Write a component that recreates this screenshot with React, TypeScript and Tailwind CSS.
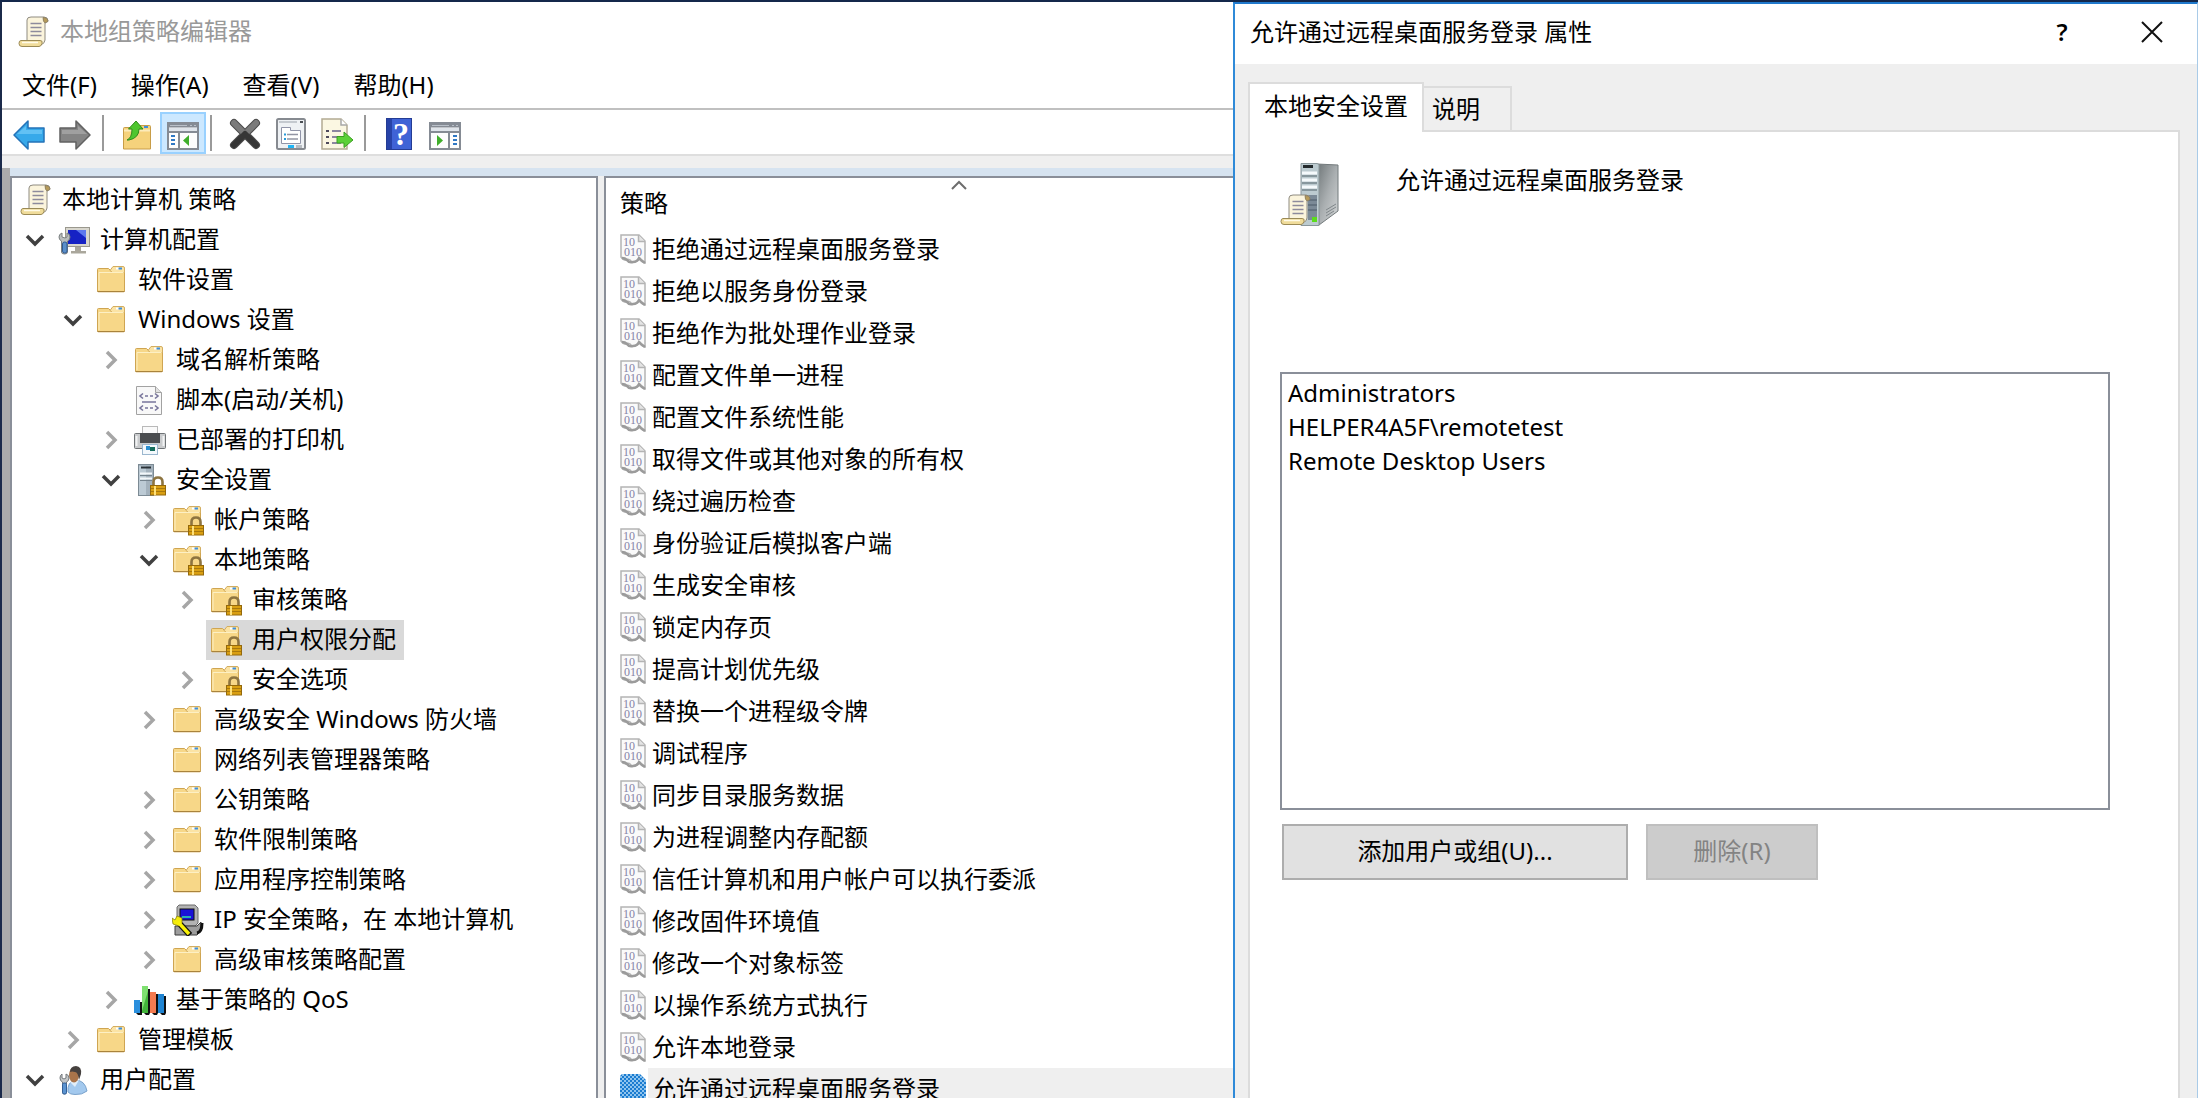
import type { ReactNode } from 'react'

/* ---------- icons ---------- */

function ScrollShape() {
  return (
    <g>
      <path d="M9 26V4q0-3 4-3h13q4 0 4 4l-3 2v17q0 3-4 5h-3z" fill="#fbf4dc" stroke="#8f8b80" />
      <path d="M25 1.500q5 0 5 4l-3 1.500q-2-1-2-5.500z" fill="#b59a5a" stroke="#857a60" strokeWidth="0.8" />
      <path d="M12.500 7.500h11M12.500 11.500h11M12.500 15.500h11M12.500 19.500h11" stroke="#8d8a9c" strokeWidth="1.6" />
      <path d="M3 24.500h19q3 0 2 3-1 3-3 3H4q-3 0-3-3t2-3z" fill="#f0dc9a" stroke="#9b8a55" />
      <path d="M4 26.500h16" stroke="#fffbe8" strokeWidth="1.5" />
    </g>
  )
}

function ScrollIcon() {
  return (
    <svg viewBox="0 0 32 32" className="size-8" aria-hidden="true">
      <ScrollShape />
    </svg>
  )
}

function FolderShape() {
  return (
    <g>
      <path d="M1.500 27V5.500q0-1 1-1h10l2 2h14V27q0 .8-1 .8h-25q-1 0-1-.8z" fill="#f7d788" stroke="#cfa552" />
      <path d="M14 6.500l3-4h10q1.500 0 1.500 1.500v4.500h-12z" fill="#fbe3a4" stroke="#d3ad60" />
      <path d="M20 4.500h3" stroke="#fff" strokeWidth="2" />
      <path d="M22.500 4.500h3.500" stroke="#3f8edb" strokeWidth="2" />
      <path d="M3 26V8.500h24.500" fill="none" stroke="#fdf0c4" />
      <path d="M1.500 27.500h27" stroke="#a9833c" />
    </g>
  )
}

function LockShape() {
  return (
    <g>
      <path d="M19.500 23v-5q0-4.500 4.500-4.500t4.500 4.500v5" fill="none" stroke="#8d7440" strokeWidth="2.6" />
      <rect x="16.500" y="21.500" width="15" height="9.500" fill="#d99f12" stroke="#94690b" />
      <path d="M17 24.500h14M17 27.500h14" stroke="#a8780c" />
      <path d="M21 22v9" stroke="#ffe17a" strokeWidth="2" />
    </g>
  )
}

function FolderIcon() {
  return (
    <svg viewBox="0 0 32 32" className="size-8" aria-hidden="true">
      <FolderShape />
    </svg>
  )
}

function LockedFolderIcon() {
  return (
    <svg viewBox="0 0 32 32" className="size-8" aria-hidden="true">
      <FolderShape />
      <LockShape />
    </svg>
  )
}

function ComputerIcon() {
  return (
    <svg viewBox="0 0 32 32" className="size-8" aria-hidden="true">
      <rect x="7.500" y="3.500" width="24" height="19" fill="#d8d6cd" stroke="#9a988e" />
      <rect x="10" y="6" width="18" height="14" fill="#1622c4" />
      <path d="M18 6h10v8z" fill="#5d78ee" />
      <path d="M17 23h6v4h5v2.500H13V27h4z" fill="#aaa79c" />
      <path d="M1 13q0-3 3-4v4l3 1 2-1V9q3 1 3 4 0 3-2.500 4v11q0 2-3 2t-3-2V17Q1 16 1 13z" fill="#b9bdbd" stroke="#7a7f80" />
      <rect x="4.500" y="18" width="4.500" height="11" rx="2" fill="#5b8fc9" stroke="#2d5a94" />
    </svg>
  )
}

function ScriptIcon() {
  return (
    <svg viewBox="0 0 32 32" className="size-8" aria-hidden="true">
      <path d="M2.500 2.500h19l6 6v22h-25z" fill="#f8f8f8" stroke="#a2a2a2" />
      <path d="M21.500 2.500v6h6" fill="#e1e1e1" stroke="#a2a2a2" />
      <path
        d="M9 9.500l-3 2.500 3 2.500M21 9.500l3 2.500-3 2.500M9 21.500L6 24l3 2.500M21 21.500l3 2.500-3 2.500M11 12h3M16 12h3M11 24h3M16 24h3M8 18h14"
        fill="none"
        stroke="#77749a"
        strokeWidth="1.600"
      />
    </svg>
  )
}

function PrinterIcon() {
  return (
    <svg viewBox="0 0 32 32" className="size-8" aria-hidden="true">
      <rect x="8.500" y="2.500" width="15" height="9" fill="#fafafa" stroke="#b9b9b9" />
      <rect x="0.500" y="9.500" width="31" height="15" rx="1" fill="#c9cbcd" stroke="#6f7376" />
      <rect x="6" y="9" width="20" height="10" fill="#4b4d50" />
      <path d="M2.500 12v10M29.500 12v10" stroke="#f2f3f4" strokeWidth="2" />
      <rect x="8.500" y="20.500" width="15" height="10" fill="#f4f9fd" stroke="#9bb7cf" />
      <rect x="12" y="22" width="4" height="4" fill="#2c8fd0" />
      <rect x="16" y="23" width="5" height="4" fill="#156d5c" />
    </svg>
  )
}

function ServerLockIcon() {
  return (
    <svg viewBox="0 0 32 32" className="size-8" aria-hidden="true">
      <rect x="4.500" y="0.500" width="15" height="31" fill="#a3b1bc" stroke="#7c8a94" />
      <path d="M5 2h7v29H5z" fill="#bccad4" />
      <path d="M7 3.500h10" stroke="#2b3238" strokeWidth="2" />
      <path d="M6 9.500h12M6 14.500h12" stroke="#f3f7fa" strokeWidth="2" />
      <path d="M6 11.500h12M6 16.500h12" stroke="#75838d" />
      <LockShape />
    </svg>
  )
}

function IpSecurityIcon() {
  return (
    <svg viewBox="0 0 32 32" className="size-8" aria-hidden="true">
      <path d="M7 1h16l3 3v15l-3 3H7l-2-2V3z" fill="#b3b3b3" stroke="#6d6d6d" />
      <rect x="8" y="5" width="14" height="11" fill="#1a12d8" stroke="#111" />
      <path d="M10 13h9" stroke="#29b0b0" strokeWidth="2" />
      <path d="M3 22h22l4-4v8l-4 5H3z" fill="#9d9d9d" stroke="#3b3b3b" />
      <path d="M25 29q5-1 5-10" fill="none" stroke="#111" strokeWidth="3" />
      <path d="M7 19l11 12" stroke="#111" strokeWidth="6" />
      <path d="M0 14l3 2 2-4 5 2v5l-3 3-6-2z" fill="#f4ec0c" stroke="#8a8410" strokeWidth="0.800" />
      <path d="M6 18l11 12" stroke="#f9f107" strokeWidth="3.500" />
    </svg>
  )
}

function QosIcon() {
  return (
    <svg viewBox="0 0 32 32" className="size-8" aria-hidden="true">
      <path d="M2 18h6v13H4l-2-2zM10 5h6v24l-1 2h-3l-2-2zM18 10h6v19l-1 2h-3l-2-2zM26 12h6v17l-1 2h-3l-2-2z" fill="#101010" />
      <rect x="0" y="16" width="6" height="13" fill="#2a8fdd" />
      <rect x="8" y="2" width="6" height="27" fill="#43b53b" />
      <path d="M8 2h6v5l-6 20z" fill="#7fe070" />
      <rect x="16" y="8" width="6" height="21" fill="#f47b50" />
      <rect x="24" y="10" width="6" height="19" fill="#1f84d2" />
    </svg>
  )
}

function UserIcon() {
  return (
    <svg viewBox="0 0 32 32" className="size-8" aria-hidden="true">
      <path d="M10 28q-1-10 7-12 10 0 12 11-5 4-12 3.500-5 0-7-2.500z" fill="#a3c9ee" stroke="#7ba3cc" />
      <path d="M12 18l5 5 4-7" fill="#e1eef9" />
      <ellipse cx="16" cy="11" rx="5" ry="7.500" fill="#a9744a" />
      <path d="M12 8q0-5.500 6-6 6 .5 5 8l-2 6q-1-8-4-8-3-1-5 0z" fill="#46413f" />
      <path d="M2 14q0-3 2-4v4l2 1 2-1v-4q3 1 3 4t-2.500 4v10q0 2-2 2t-2-2V18Q2 17 2 14z" fill="#c3c6c8" stroke="#74797c" />
      <rect x="4.500" y="19" width="4" height="11" rx="1.500" fill="#5b93d0" stroke="#336199" />
    </svg>
  )
}

function PolicyIcon() {
  return (
    <svg viewBox="0 0 26 30" className="h-[30px] w-[26px]" aria-hidden="true">
      <path d="M1 1h18l6 6v22q-4-1-5-4-4 4-8 3-3-4-6-2-3 0-5-3z" fill="#fafafa" stroke="#b4b4b4" strokeWidth="1.500" />
      <path d="M18.500 1v6.500H25" fill="#e4e4e4" stroke="#b4b4b4" strokeWidth="1.500" />
      <path d="M2 24q3 0 5 2 2 3 6 2 4 0 6-4l2 2 4 3" fill="none" stroke="#9b9b9b" strokeWidth="2.500" />
      <g fill="#8683a6" fontFamily="'Liberation Serif', serif" fontSize="12">
        <text x="3" y="12">10</text>
        <text x="4" y="22">010</text>
      </g>
    </svg>
  )
}

function SelectedPolicyIcon() {
  return (
    <svg viewBox="0 0 26 30" className="h-[30px] w-[26px]" aria-hidden="true">
      <defs>
        <pattern id="dither" width="4" height="4" patternUnits="userSpaceOnUse">
          <rect width="4" height="4" fill="#8fc4ee" />
          <rect width="2" height="2" fill="#1b7cd0" />
          <rect x="2" y="2" width="2" height="2" fill="#1b7cd0" />
        </pattern>
      </defs>
      <path d="M2 0h18l6 6v23l-6-3-8 3-6-2-6-2V2z" fill="url(#dither)" />
    </svg>
  )
}

function ServerScrollIcon() {
  return (
    <svg viewBox="0 0 60 64" className="h-16 w-[60px]" aria-hidden="true">
      <defs>
        <linearGradient id="side" x1="0" y1="0" x2="1" y2="1">
          <stop offset="0" stopColor="#6f7678" />
          <stop offset="0.500" stopColor="#a9aeb0" />
          <stop offset="1" stopColor="#d5d8d9" />
        </linearGradient>
      </defs>
      <path d="M37 2l21 1v46L39 63z" fill="url(#side)" stroke="#737a7c" />
      <path d="M21 1.500h16l2 1v61H21z" fill="#bccbd0" stroke="#8a979b" />
      <path d="M23 4.500h10" stroke="#23292c" strokeWidth="3" />
      <path d="M22 11h15M22 18h15M22 25h15" stroke="#f5fafc" strokeWidth="3" />
      <path d="M22 14h15M22 21h15M22 28h15" stroke="#76868c" strokeWidth="1.500" />
      <path d="M28 33h9v25h-9z" fill="#7b8a97" />
      <path d="M28 38h9M28 43h9M28 48h9" stroke="#4c5a68" />
      <rect x="32" y="55" width="5" height="5" fill="#5bdc1c" />
      <path d="M46 48l10-6M46 51l10-6M46 54l8-5" stroke="#80878a" />
      <g transform="translate(0 32)">
        <ScrollShape />
      </g>
    </svg>
  )
}

function ArrowIcon({ forward = false }: { forward?: boolean }) {
  return (
    <svg viewBox="0 0 32 30" className="h-[30px] w-8" aria-hidden="true">
      {forward ? (
        <>
          <path d="M31 15L17 1v7H1v14h16v7z" fill="#858585" stroke="#626262" strokeWidth="1.500" strokeLinejoin="round" />
          <path d="M3 14V10h16V6l9 8z" fill="#a0a0a0" />
        </>
      ) : (
        <>
          <path d="M1 15L15 1v7h16v14H15v7z" fill="#37a9ea" stroke="#2473b8" strokeWidth="1.500" strokeLinejoin="round" />
          <path d="M4 14l9-8v4h16v4z" fill="#62c1f4" />
        </>
      )}
    </svg>
  )
}

function FolderUpIcon() {
  return (
    <svg viewBox="0 0 30 30" className="size-[30px]" aria-hidden="true">
      <path d="M1.500 29V8.500q0-1 1-1h10l2-2h13q1 0 1 1V29z" fill="#f5d27c" stroke="#c89d48" />
      <path d="M2 10.500h26" stroke="#fcebba" strokeWidth="2" />
      <path d="M22 7h4" stroke="#3f8edb" strokeWidth="2" />
      <path d="M5 20q5-2 5-11H6.500L14 1l7 8h-4q0 9-10 11z" fill="#4fc62f" stroke="#2f8c1c" strokeLinejoin="round" />
    </svg>
  )
}

function PaneIcon({ right = false }: { right?: boolean }) {
  return (
    <svg viewBox="0 0 32 28" className="h-7 w-8" aria-hidden="true">
      <rect x="1" y="1" width="30" height="26" fill="#fdfdfd" stroke="#858b94" strokeWidth="2" />
      <path d="M1 3.500h30" stroke="#858b94" strokeWidth="4" />
      <path d="M2 7.500h28" stroke="#dfe4ea" strokeWidth="3" />
      <path d="M1 10h30" stroke="#858b94" strokeWidth="2" />
      <path d="M3 3.500h17M23 3.500h2M27 3.500h2" stroke="#b9c0c9" />
      {right ? (
        <>
          <path d="M20 10v17" stroke="#858b94" strokeWidth="2" />
          <path d="M24 14h4M24 18h4M24 22h4" stroke="#2f78c4" strokeWidth="2" />
          <path d="M8 13l6 5.500L8 24z" fill="#3fae2a" />
        </>
      ) : (
        <>
          <path d="M12 10v17" stroke="#858b94" strokeWidth="2" />
          <path d="M4 14h4M4 18h4M4 22h4" stroke="#2f78c4" strokeWidth="2" />
          <path d="M22 13l-6 5.500 6 5.500z" fill="#3fae2a" />
        </>
      )}
    </svg>
  )
}

function DeleteIcon() {
  return (
    <svg viewBox="0 0 32 32" className="size-8" aria-hidden="true">
      <g fill="none" strokeLinecap="round">
        <path d="M5 5l22 22M27 5L5 27" stroke="#4c4c4c" strokeWidth="8" />
        <path d="M5 5l10 10M27 5L17 15" stroke="#7b7b7b" strokeWidth="6" />
        <path d="M27 27L16 16M5 27l11-11" stroke="#363636" strokeWidth="6" />
      </g>
    </svg>
  )
}

function PropertiesIcon() {
  return (
    <svg viewBox="0 0 30 32" className="h-8 w-[30px]" aria-hidden="true">
      <rect x="1" y="1" width="28" height="30" rx="1.500" fill="#eef1f4" stroke="#868a90" strokeWidth="2" />
      <path d="M3 4h18" stroke="#c4c9cf" strokeWidth="2" />
      <path d="M24 4h3" stroke="#4a4e54" strokeWidth="2" />
      <path d="M5.500 9.500h9v3h10v13h-19z" fill="#fff" stroke="#9094a8" />
      <path d="M11 16.500h11M11 21h11" stroke="#9295a3" strokeWidth="1.500" />
      <path d="M8 16.500h2M8 21h2" stroke="#2a9ad8" strokeWidth="2" />
      <path d="M12 28.500h6" stroke="#20b4f4" strokeWidth="3" />
      <path d="M20 28.500h6" stroke="#b7bcc2" strokeWidth="3" />
    </svg>
  )
}

function ExportIcon() {
  return (
    <svg viewBox="0 0 32 32" className="size-8" aria-hidden="true">
      <path d="M1 1h19l6 6v24H1z" fill="#fbf7e2" stroke="#b2aa92" strokeWidth="1.500" />
      <path d="M20 1v6h6" fill="#fff" stroke="#a8a8a8" strokeWidth="1.500" />
      <path d="M5 13h3M5 19h3M5 25h3" stroke="#4e4a5c" strokeWidth="2" />
      <path d="M11 13h9M11 19h6M11 25h9" stroke="#8c86a0" strokeWidth="1.800" />
      <path d="M16 18.500h7v-4.500l9 8-9 7.500V25h-7z" fill="#5bd137" stroke="#3b9e22" strokeLinejoin="round" />
    </svg>
  )
}

function HelpBookIcon() {
  return (
    <svg viewBox="0 0 26 32" className="h-8 w-[26px]" aria-hidden="true">
      <rect x="0.500" y="0.500" width="25" height="31" fill="#3f63d6" stroke="#243c94" />
      <rect x="1" y="1" width="5" height="30" fill="#2743a8" />
      <text x="15" y="27" textAnchor="middle" fill="#fff" fontFamily="'Liberation Serif', serif" fontSize="32" fontWeight="bold">
        ?
      </text>
    </svg>
  )
}

function Chevron({ open }: { open: boolean }) {
  return (
    <svg viewBox="0 0 20 20" className="size-5" fill="none" strokeWidth="3.500" aria-hidden="true">
      {open ? <path d="M2 6l8 8 8-8" stroke="#404040" /> : <path d="M6 2l8 8-8 8" stroke="#a6a6a6" />}
    </svg>
  )
}

/* ---------- data ---------- */

interface TreeNode {
  label: string
  icon: ReactNode
  expandable?: boolean
  selected?: boolean
  children?: TreeNode[]
}

const COMPUTER_NODES: TreeNode[] = [
  {
    label: '计算机配置',
    icon: <ComputerIcon />,
    expandable: true,
    children: [
      { label: '软件设置', icon: <FolderIcon /> },
      {
        label: 'Windows 设置',
        icon: <FolderIcon />,
        expandable: true,
        children: [
          { label: '域名解析策略', icon: <FolderIcon />, expandable: true },
          { label: '脚本(启动/关机)', icon: <ScriptIcon /> },
          { label: '已部署的打印机', icon: <PrinterIcon />, expandable: true },
          {
            label: '安全设置',
            icon: <ServerLockIcon />,
            expandable: true,
            children: [
              { label: '帐户策略', icon: <LockedFolderIcon />, expandable: true },
              {
                label: '本地策略',
                icon: <LockedFolderIcon />,
                expandable: true,
                children: [
                  { label: '审核策略', icon: <LockedFolderIcon />, expandable: true },
                  { label: '用户权限分配', icon: <LockedFolderIcon />, selected: true },
                  { label: '安全选项', icon: <LockedFolderIcon />, expandable: true },
                ],
              },
              { label: '高级安全 Windows 防火墙', icon: <FolderIcon />, expandable: true },
              { label: '网络列表管理器策略', icon: <FolderIcon /> },
              { label: '公钥策略', icon: <FolderIcon />, expandable: true },
              { label: '软件限制策略', icon: <FolderIcon />, expandable: true },
              { label: '应用程序控制策略', icon: <FolderIcon />, expandable: true },
              { label: 'IP 安全策略，在 本地计算机', icon: <IpSecurityIcon />, expandable: true },
              { label: '高级审核策略配置', icon: <FolderIcon />, expandable: true },
            ],
          },
          { label: '基于策略的 QoS', icon: <QosIcon />, expandable: true },
        ],
      },
      { label: '管理模板', icon: <FolderIcon />, expandable: true },
    ],
  },
  { label: '用户配置', icon: <UserIcon />, expandable: true, children: [] },
]

const POLICIES = [
  '拒绝通过远程桌面服务登录',
  '拒绝以服务身份登录',
  '拒绝作为批处理作业登录',
  '配置文件单一进程',
  '配置文件系统性能',
  '取得文件或其他对象的所有权',
  '绕过遍历检查',
  '身份验证后模拟客户端',
  '生成安全审核',
  '锁定内存页',
  '提高计划优先级',
  '替换一个进程级令牌',
  '调试程序',
  '同步目录服务数据',
  '为进程调整内存配额',
  '信任计算机和用户帐户可以执行委派',
  '修改固件环境值',
  '修改一个对象标签',
  '以操作系统方式执行',
  '允许本地登录',
  '允许通过远程桌面服务登录',
]

const SELECTED_POLICY = '允许通过远程桌面服务登录'

const MEMBERS = ['Administrators', 'HELPER4A5F\\remotetest', 'Remote Desktop Users']

/* ---------- editor window ---------- */

function TreeLabel({ node }: { node: TreeNode }) {
  return (
    <button
      type="button"
      className={`flex h-10 items-center gap-[10px] pr-2 pl-1 whitespace-nowrap ${node.selected ? 'bg-[#d9d9d9]' : ''}`}
    >
      {node.icon}
      <span className="pb-[2px]">{node.label}</span>
    </button>
  )
}

function TreeItems({ nodes }: { nodes: TreeNode[] }) {
  return (
    <>
      {nodes.map((node) => (
        <li key={node.label}>
          <div className="flex h-10">
            {node.expandable ? (
              <button type="button" aria-label={node.label} className="flex w-[38px] items-center justify-center">
                <Chevron open={!!node.children} />
              </button>
            ) : (
              <span className="w-[38px]" />
            )}
            <TreeLabel node={node} />
          </div>
          {node.children && (
            <ul className="pl-[38px]">
              <TreeItems nodes={node.children} />
            </ul>
          )}
        </li>
      ))}
    </>
  )
}

function ToolButton({ label, children }: { label: string; children: ReactNode }) {
  return (
    <button type="button" aria-label={label} className="flex h-full w-[46px] items-end justify-center pb-1">
      {children}
    </button>
  )
}

function Divider() {
  return <span className="mr-[10px] ml-1 h-9 w-[2px] bg-[#9a9a9a]" />
}

function PolicyTable() {
  return (
    <table className="w-[706px] table-fixed border-collapse text-left">
      <colgroup>
        <col className="w-[42px]" />
        <col />
      </colgroup>
      <thead>
        <tr className="h-[50px]">
          <th colSpan={2} className="relative p-0 pl-[14px] font-normal">
            策略
            <svg
              viewBox="0 0 16 10"
              className="absolute top-[2px] left-1/2 h-[10px] w-4 -translate-x-1/2"
              fill="none"
              aria-hidden="true"
            >
              <path d="M1 9l7-7 7 7" stroke="#6d6d6d" strokeWidth="2" />
            </svg>
          </th>
        </tr>
      </thead>
      <tbody>
        {POLICIES.map((name) => {
          const selected = name === SELECTED_POLICY
          return (
            <tr key={name} className="h-[42px]">
              <td className="p-0 pl-[14px]">{selected ? <SelectedPolicyIcon /> : <PolicyIcon />}</td>
              <td className={`p-0 pl-1 whitespace-nowrap ${selected ? 'bg-[#efefef]' : ''}`}>{name}</td>
            </tr>
          )
        })}
      </tbody>
    </table>
  )
}

function EditorWindow() {
  return (
    <section className="flex min-h-0 min-w-0 flex-col overflow-hidden border-l-2 border-[#1b2a4a] bg-white">
      <header className="flex h-[60px] shrink-0 items-center gap-2 pl-4 text-[#999]">
        <span className="w-[34px]">
          <ScrollIcon />
        </span>
        <h1 className="pb-[2px]">本地组策略编辑器</h1>
      </header>

      <nav className="flex h-12 shrink-0 items-center gap-[34px] border-b-2 border-[#c0c0c0] pl-5">
        <button type="button">文件(F)</button>
        <button type="button">操作(A)</button>
        <button type="button">查看(V)</button>
        <button type="button">帮助(H)</button>
      </nav>

      <div className="flex h-[46px] shrink-0 items-center border-b-2 border-[#dedede] pt-[2px] pl-1">
        <ToolButton label="后退">
          <ArrowIcon />
        </ToolButton>
        <ToolButton label="前进">
          <ArrowIcon forward />
        </ToolButton>
        <Divider />
        <ToolButton label="上一级">
          <FolderUpIcon />
        </ToolButton>
        <button
          type="button"
          aria-label="显示/隐藏控制台树"
          aria-pressed="true"
          className="flex h-full w-[46px] items-end justify-center border-2 border-[#99d1ff] bg-[#cce8ff] pb-[2px]"
        >
          <PaneIcon />
        </button>
        <Divider />
        <ToolButton label="删除">
          <DeleteIcon />
        </ToolButton>
        <ToolButton label="属性">
          <PropertiesIcon />
        </ToolButton>
        <ToolButton label="导出列表">
          <ExportIcon />
        </ToolButton>
        <Divider />
        <ToolButton label="帮助">
          <HelpBookIcon />
        </ToolButton>
        <ToolButton label="显示/隐藏操作窗格">
          <PaneIcon right />
        </ToolButton>
      </div>

      <div className="h-3 shrink-0 bg-[#efefef]" />

      <div className="flex min-h-0 flex-1 flex-col border-l-8 border-[#ababab] bg-[#efefef]">
        <div className="h-2 shrink-0 bg-[#d6e3f0]" />
        <div className="flex min-h-0 flex-1 gap-[6px]">
          <div className="w-[588px] shrink-0 overflow-hidden border-2 border-b-0 border-[#8a8f99] bg-white pt-[2px] pl-1">
            <ul>
              <li>
                <TreeLabel node={{ label: '本地计算机 策略', icon: <ScrollIcon /> }} />
                <ul>
                  <TreeItems nodes={COMPUTER_NODES} />
                </ul>
              </li>
            </ul>
          </div>
          <div className="min-w-0 flex-1 overflow-hidden border-t-2 border-l-2 border-[#8a8f99] bg-white">
            <PolicyTable />
          </div>
        </div>
      </div>
    </section>
  )
}

/* ---------- properties dialog ---------- */

function PropertiesDialog() {
  return (
    <section
      role="dialog"
      aria-labelledby="dialog-title"
      className="flex min-h-0 min-w-0 flex-col border-t-2 border-r border-l-2 border-t-[#2079cc] border-r-[#a9cbe8] border-l-[#2f8ad8] bg-[#efefef]"
    >
      <header className="flex h-[60px] shrink-0 items-center bg-white pb-1 pl-[15px]">
        <h2 id="dialog-title" className="flex-1">
          允许通过远程桌面服务登录 属性
        </h2>
        <button type="button" aria-label="帮助" className="w-[90px] text-center font-semibold">
          ?
        </button>
        <button type="button" aria-label="关闭" className="flex w-[90px] justify-center">
          <svg viewBox="0 0 22 22" className="size-[22px]" aria-hidden="true">
            <path d="M1 1l20 20M21 1L1 21" stroke="#111" strokeWidth="2" />
          </svg>
        </button>
      </header>

      <div className="flex min-h-0 flex-1 flex-col pt-[18px] pr-[17px] pl-[13px]">
        <div role="tablist" className="relative z-10 -mb-[2px] flex items-end">
          <button
            type="button"
            role="tab"
            aria-selected="true"
            className="h-[50px] border-2 border-b-0 border-[#dcdcdc] bg-white px-[14px] pb-1"
          >
            本地安全设置
          </button>
          <button
            type="button"
            role="tab"
            aria-selected="false"
            className="h-[46px] border-2 border-l-0 border-[#dcdcdc] pr-[30px] pl-2"
          >
            说明
          </button>
        </div>

        <div
          role="tabpanel"
          className="flex min-h-0 flex-1 flex-col border-2 border-b-0 border-[#dcdcdc] bg-white pt-[30px] pr-[68px] pl-[30px]"
        >
          <div className="flex h-[210px] shrink-0 items-start gap-14">
            <ServerScrollIcon />
            <p className="pt-[2px]">允许通过远程桌面服务登录</p>
          </div>

          <ul aria-label="用户或组" className="h-[438px] shrink-0 border-2 border-[#8a8f99] bg-white pt-[2px] pl-[6px]">
            {MEMBERS.map((member) => (
              <li key={member} className="h-[34px] leading-[34px]">
                {member}
              </li>
            ))}
          </ul>

          <div className="flex gap-[18px] pt-[14px] pl-[2px]">
            <button type="button" className="h-14 w-[346px] border-2 border-[#adadad] bg-[#e1e1e1] pb-[2px]">
              添加用户或组(U)...
            </button>
            <button
              type="button"
              disabled
              className="h-14 w-[172px] border-2 border-[#bfbfbf] bg-[#cccccc] pb-[2px] text-[#838383]"
            >
              删除(R)
            </button>
          </div>
        </div>
      </div>
    </section>
  )
}

export default function App() {
  return (
    <main className="grid h-screen grid-cols-[1233fr_965fr] grid-rows-[minmax(0,1fr)] overflow-hidden bg-[#14284b] pt-[2px] font-['Noto_Sans','Noto_Sans_CJK_SC',sans-serif] text-2xl leading-8 text-black">
      <EditorWindow />
      <PropertiesDialog />
    </main>
  )
}
